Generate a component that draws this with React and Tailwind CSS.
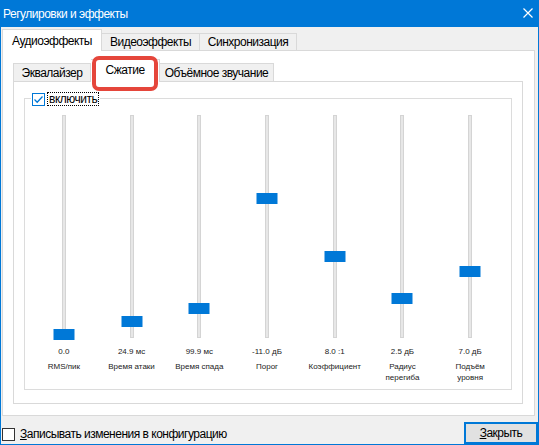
import React from 'react';

const sliders = [
  { value: '0.0', name: ['RMS/пик'], top: 213 },
  { value: '24.9 мс', name: ['Время атаки'], top: 200 },
  { value: '99.9 мс', name: ['Время спада'], top: 187 },
  { value: '-11.0 дБ', name: ['Порог'], top: 77 },
  { value: '8.0 :1', name: ['Коэффициент'], top: 135 },
  { value: '2.5 дБ', name: ['Радиус', 'перегиба'], top: 177 },
  { value: '7.0 дБ', name: ['Подъём', 'уровня'], top: 150 },
];

const Slider = ({ value, name, top }) => (
  <div className="flex flex-col items-center">
    <div className="relative w-[4px] h-[223px] bg-[#e7e7e7] border border-[#d4d4d4]">
      <div
        className="absolute left-1/2 -translate-x-1/2 w-[21px] h-[11px] bg-[#0078d7]"
        style={{ top }}
      />
    </div>
    <div className="mt-[8px] text-[8px] leading-[11px] text-[#222] whitespace-nowrap">{value}</div>
    <div className="mt-[4px] text-[8px] leading-[11px] text-[#222] text-center whitespace-nowrap">
      {name.map((n) => (
        <div key={n}>{n}</div>
      ))}
    </div>
  </div>
);

export default function App() {
  return (
    <div className="w-[539px] h-[445px] bg-[#0078d7] px-[1px] pb-[1px] flex flex-col font-['Liberation_Sans',sans-serif] text-[12px] tracking-[-0.5px] text-black">
      {/* title bar */}
      <div className="h-[27px] flex items-center justify-between pl-[2px] pr-[5px] text-white">
        <span>Регулировки и эффекты</span>
        <svg width="10" height="10" viewBox="0 0 10 10" className="mb-[1px]">
          <path d="M0.5 0.5 L9.5 9.5 M9.5 0.5 L0.5 9.5" stroke="white" strokeWidth="1.2" />
        </svg>
      </div>

      <div className="flex-1 bg-[#f0f0f0] flex flex-col">
        {/* outer tabs */}
        <div className="h-[23px] flex items-end pl-[1px]">
          <div className="relative z-10 -mb-[1px] w-[100px] h-[22px] bg-white border border-b-0 border-[#d9d9d9] flex items-center justify-center">
            Аудиоэффекты
          </div>
          <div className="w-[98px] h-[17px] border border-b-0 border-l-0 border-[#d9d9d9] flex items-center justify-center">
            Видеоэффекты
          </div>
          <div className="w-[97px] h-[17px] border border-b-0 border-l-0 border-[#d9d9d9] flex items-center justify-center">
            Синхронизация
          </div>
        </div>

        {/* outer panel */}
        <div className="ml-[1px] w-[533px] h-[366px] bg-white border border-[#d9d9d9] pl-[10px] pt-[8px]">
          <div className="h-[22px] flex items-end">
            <div className="w-[78px] h-[18px] bg-[#f0f0f0] border border-b-0 border-[#d9d9d9] flex items-center justify-center">
              Эквалайзер
            </div>
            <div className="relative z-10 -mb-[1px] w-[69px] h-[23px] bg-white border border-b-0 border-l-0 border-[#d9d9d9] flex items-center justify-center pb-[2px]">
              Сжатие
              <div className="absolute left-[1px] -top-[4px] w-[66px] h-[35px] border-[4px] border-[#e5463b] rounded-[7px]" />
            </div>
            <div className="w-[114px] h-[18px] bg-[#f0f0f0] border border-b-0 border-l-0 border-[#d9d9d9] flex items-center justify-center">
              Объёмное звучание
            </div>
          </div>

          {/* inner panel */}
          <div className="w-[510px] h-[323px] bg-white border border-[#d9d9d9] pl-[10px] pt-[16px]">
            <div className="relative w-[488px] h-[292px] border border-[#dcdcdc] pt-[16px] pl-[5px] pr-[7px]">
              <div className="absolute left-[6px] -top-[7px] bg-white flex items-center pl-[1px] pr-[1px]">
                <div className="w-[13px] h-[13px] border border-[#0078d7] bg-white flex items-center justify-center">
                  <svg width="11" height="11" viewBox="0 0 11 11">
                    <path d="M1.5 5.5 L4.2 8.2 L9.5 2.5" fill="none" stroke="#0078d7" strokeWidth="1.3" />
                  </svg>
                </div>
                <div className="ml-[2px] h-[14px] px-[1px] border border-dotted border-black flex items-center leading-none">
                  включить
                </div>
              </div>
              <div className="grid grid-cols-7 tracking-normal">
                {sliders.map((s) => (
                  <Slider key={s.value} {...s} />
                ))}
              </div>
            </div>
          </div>
        </div>

        {/* bottom row */}
        <div className="flex-1 flex items-start justify-between pl-[1px] pt-[6px]">
          <div className="mt-[3px] flex items-center">
            <div className="w-[13px] h-[13px] border border-[#333] bg-white" />
            <span className="ml-[5px]">
              <span className="underline">З</span>аписывать изменения в конфигурацию
            </span>
          </div>
          <div className="w-[74px] h-[22px] border-2 border-[#0078d7] bg-[#e1e1e1] flex items-center justify-center">
            <span>
              <span className="underline">З</span>акрыть
            </span>
          </div>
        </div>
      </div>
    </div>
  );
}
